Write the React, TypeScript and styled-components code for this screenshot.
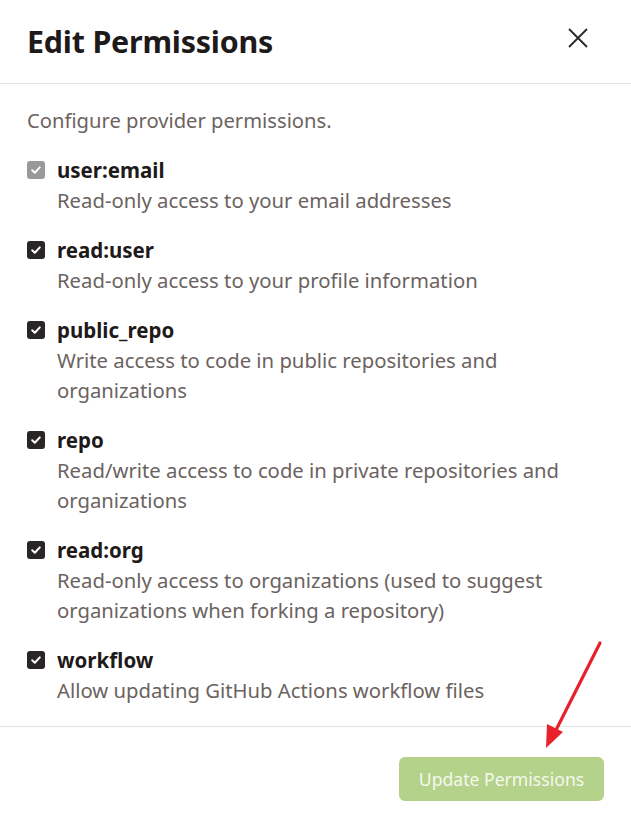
import React from "react";
import styled, { createGlobalStyle } from "styled-components";

const Global = createGlobalStyle`
  html, body { margin: 0; padding: 0; background: #fff; }
  body { font-family: "Noto Sans", "Open Sans", sans-serif; }
`;

const Dialog = styled.div`
  position: relative;
  width: 631px;
  background: #fff;
  color: #211d1d;
`;

const Header = styled.div`
  height: 84px;
  box-sizing: border-box;
  display: flex;
  align-items: center;
  justify-content: space-between;
  padding: 0 27px;
  border-bottom: 1px solid #e3e3e3;
`;

const Title = styled.h2`
  margin: 0;
  font-size: 30.4px;
  font-weight: 700;
  color: #1e1a1a;
  letter-spacing: -0.2px;
`;

const CloseButton = styled.button`
  border: 0;
  background: none;
  padding: 0;
  margin-right: 14px;
  margin-bottom: 8px;
  width: 24px;
  height: 24px;
  display: flex;
  align-items: center;
  justify-content: center;
  cursor: pointer;
`;

const Body = styled.div`
  padding: 21px 27px;
  display: flex;
  flex-direction: column;
  gap: 20px;
`;

const Intro = styled.p`
  margin: 0;
  font-size: 20.2px;
  line-height: 30px;
  color: #6b6360;
`;

const Item = styled.div`
  display: flex;
  flex-direction: column;
`;

const LabelRow = styled.div`
  display: flex;
  align-items: center;
  gap: 12px;
  height: 30px;
`;

const Box = styled.span<{ $disabled?: boolean }>`
  width: 18px;
  height: 18px;
  border-radius: 3px;
  background: ${(p) => (p.$disabled ? "#9a9898" : "#2a2626")};
  display: flex;
  align-items: center;
  justify-content: center;
  flex: none;
`;

const Label = styled.span`
  font-size: 20.5px;
  font-weight: 700;
  color: #1e1a1a;
`;

const Desc = styled.div`
  padding-left: 30px;
  font-size: 20.3px;
  line-height: 30px;
  color: #6b6360;
`;

const Footer = styled.div`
  border-top: 1px solid #e3e3e3;
  padding: 30px 27px 18px;
  display: flex;
  justify-content: flex-end;
`;

const Button = styled.button`
  height: 44px;
  width: 205px;
  border: 0;
  border-radius: 6px;
  background: #b5d28a;
  color: #f4f8ee;
  font-family: "Noto Sans", "Open Sans", sans-serif;
  font-size: 17.6px;
  padding: 0;
  cursor: default;
`;

const Arrow = styled.svg`
  position: absolute;
  left: 530px;
  top: 636px;
  pointer-events: none;
`;

const Check = () => (
  <svg width="12" height="12" viewBox="0 0 12 12">
    <path d="M2.2 6.3 L4.8 8.8 L9.8 3.4" fill="none" stroke="#fff" strokeWidth="2" strokeLinecap="round" strokeLinejoin="round" />
  </svg>
);

const perms = [
  { name: "user:email", desc: "Read-only access to your email addresses", disabled: true },
  { name: "read:user", desc: "Read-only access to your profile information" },
  { name: "public_repo", desc: "Write access to code in public repositories and organizations" },
  { name: "repo", desc: "Read/write access to code in private repositories and organizations" },
  { name: "read:org", desc: "Read-only access to organizations (used to suggest organizations when forking a repository)" },
  { name: "workflow", desc: "Allow updating GitHub Actions workflow files" },
];

export default function App() {
  return (
    <>
      <Global />
      <Dialog>
        <Header>
          <Title>Edit Permissions</Title>
          <CloseButton aria-label="Close">
            <svg width="20" height="20" viewBox="0 0 20 20">
              <path d="M1 1 L19 19 M19 1 L1 19" stroke="#2a2626" strokeWidth="1.8" />
            </svg>
          </CloseButton>
        </Header>
        <Body>
          <Intro>Configure provider permissions.</Intro>
          {perms.map((p) => (
            <Item key={p.name}>
              <LabelRow>
                <Box $disabled={p.disabled}>
                  <Check />
                </Box>
                <Label>{p.name}</Label>
              </LabelRow>
              <Desc>{p.desc}</Desc>
            </Item>
          ))}
        </Body>
        <Footer>
          <Button>Update Permissions</Button>
        </Footer>
        <Arrow width="80" height="120" viewBox="0 0 80 120">
          <line x1="70" y1="7" x2="24" y2="98" stroke="#e8202a" strokeWidth="3.2" strokeLinecap="round" />
          <path d="M16 112 L17 88 L33 96 Z" fill="#e8202a" />
        </Arrow>
      </Dialog>
    </>
  );
}
